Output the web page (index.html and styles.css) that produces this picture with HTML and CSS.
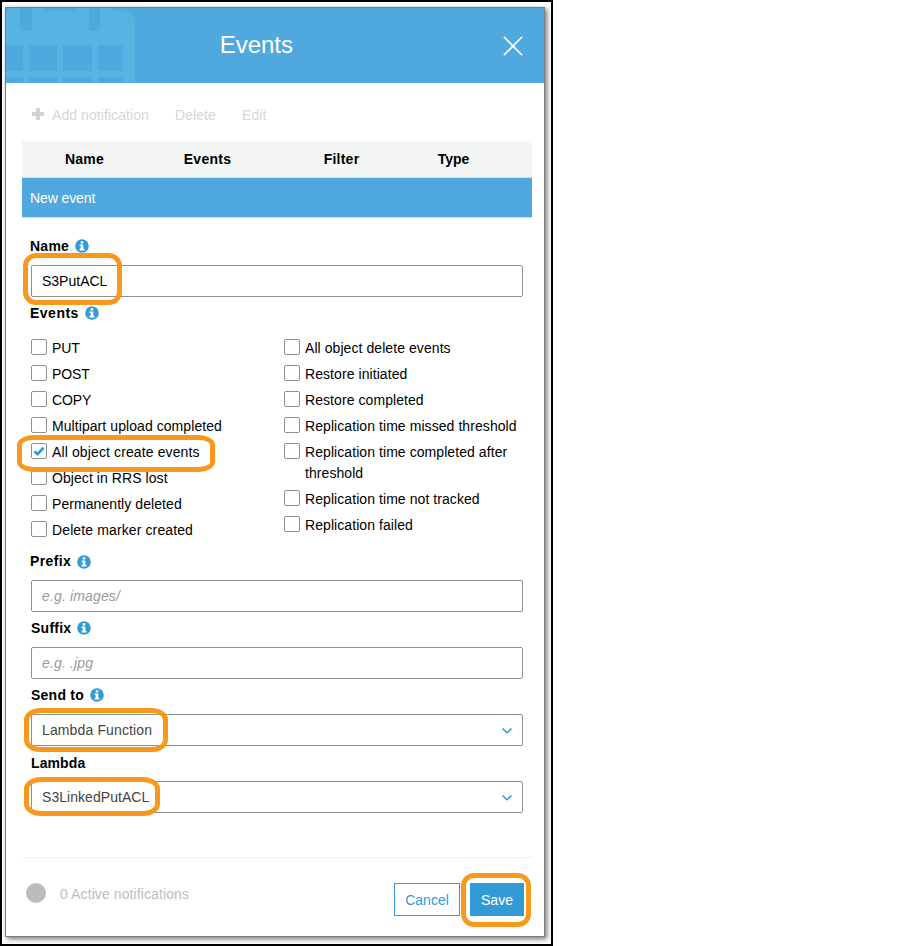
FILE: index.html
```html
<!DOCTYPE html>
<html lang="en">
<head>
<meta charset="utf-8">
<title>Events</title>
<link rel="stylesheet" href="styles.css">
</head>
<body>
<svg width="0" height="0" class="defs">
  <symbol id="info" viewBox="0 0 14 14"><circle cx="7" cy="7" r="6.8" fill="#329ad6"/><path d="M5.700 2.300h2.600v2.100H5.700zM4.600 5.500h3.700v4.300h1.100v1.600H4.600V9.800h1.100V7.100H4.600z" fill="#fff"/></symbol>
  <symbol id="chevron" viewBox="0 0 12 8"><path d="M1.500 1.500 6 5.800l4.500-4.300" fill="none" stroke="#329ad6" stroke-width="1.500"/></symbol>
</svg>
<div class="frame">
  <main class="dialog">
    <header class="header">
      <svg class="calendar" width="130" height="75" viewBox="0 0 130 75">
        <path d="M3 0h34v3h34V0h34v3h12q12 1 12 13v59H0V3h3z" fill="#56b4e3"/>
        <path d="M14 0h12v20q0 3-3 3h-6q-3 0-3-3zM83 0h11v20q0 3-3 3h-5q-3 0-3-3zM0 37h17v26H0zM23 37h28v26H23zM57 37h29v26H57zM92 37h25v26H92zM0 69h17v6H0zM23 69h28v6H23zM57 69h29v6H57zM92 69h25v6H92z" fill="#4fa9de"/>
      </svg>
      <h1>Events</h1>
      <svg class="close" width="20" height="20" viewBox="0 0 20 20"><path d="M.8.8l18.400 18.400M19.200.8.8 19.200" stroke="#fff" stroke-width="1.600"/></svg>
    </header>
    <div class="toolbar">
      <svg class="plus" width="12" height="12" viewBox="0 0 12 12"><path d="M4 0h4v4h4v4H8v4H4V8H0V4h4z" fill="#d0d3d3"/></svg>
      <span class="add">Add notification</span><span class="delete">Delete</span><span>Edit</span>
    </div>
    <div class="table">
      <div class="thead"><b>Name</b><b>Events</b><b>Filter</b><b class="type">Type</b></div>
      <div class="selected">New event</div>
    </div>
    <form class="form">
      <div class="label first">Name <svg class="info"><use href="#info"/></svg></div>
      <div class="input"><span>S3PutACL</span></div>
      <div class="label wide">Events <svg class="info"><use href="#info"/></svg></div>
      <div class="events">
        <div class="column">
          <div class="check"><i></i><span class="tight">PUT</span></div>
          <div class="check"><i></i><span class="tight">POST</span></div>
          <div class="check"><i></i><span class="tight">COPY</span></div>
          <div class="check"><i></i><span>Multipart upload completed</span></div>
          <div class="check"><i><svg width="14" height="14" viewBox="0 0 14 14"><path d="M2.500 7.300l3 2.800 6-6.300" fill="none" stroke="#329ad6" stroke-width="2.800"/></svg></i><span class="loose">All object create events</span></div>
          <div class="check"><i></i><span>Object in RRS lost</span></div>
          <div class="check"><i></i><span>Permanently deleted</span></div>
          <div class="check"><i></i><span class="loose">Delete marker created</span></div>
        </div>
        <div class="column">
          <div class="check"><i></i><span>All object delete events</span></div>
          <div class="check"><i></i><span>Restore initiated</span></div>
          <div class="check"><i></i><span>Restore completed</span></div>
          <div class="check"><i></i><span>Replication time missed threshold</span></div>
          <div class="check"><i></i><span>Replication time completed after<br>threshold</span></div>
          <div class="check"><i></i><span>Replication time not tracked</span></div>
          <div class="check"><i></i><span>Replication failed</span></div>
        </div>
      </div>
      <div class="label prefix">Prefix <svg class="info"><use href="#info"/></svg></div>
      <div class="input hint">e.g. images/</div>
      <div class="label suffix">Suffix <svg class="info"><use href="#info"/></svg></div>
      <div class="input hint">e.g. .jpg</div>
      <div class="label send">Send to <svg class="info"><use href="#info"/></svg></div>
      <div class="input select"><span>Lambda Function</span><svg width="12" height="8"><use href="#chevron"/></svg></div>
      <div class="label lambda">Lambda</div>
      <div class="input select"><span class="function">S3LinkedPutACL</span><svg width="12" height="8"><use href="#chevron"/></svg></div>
    </form>
    <footer class="footer">
      <i class="dot"></i><span class="status">0 Active notifications</span>
      <span class="button cancel">Cancel</span><span class="button save">Save</span>
    </footer>
  </main>
  <div class="callout on-name"></div>
  <div class="callout on-create"></div>
  <div class="callout on-send"></div>
  <div class="callout on-lambda"></div>
  <div class="callout on-save"></div>
</div>
</body>
</html>
```
FILE: styles.css
```css
* { box-sizing: border-box; }
body { margin: 0; background: #fff; font: 14px/21px "Liberation Sans", Arial, sans-serif; color: #000; overflow: hidden; }
svg { display: block; flex: none; }
.defs { position: absolute; }
.frame { position: relative; width: 553px; height: 946px; border: 2px solid #000; padding: 5px 0 0 3px; }
.dialog { width: 540px; height: 930px; border: 1px solid #7d7d7d; box-shadow: 2px 2px 5px rgba(0,0,0,.55); display: flex; flex-direction: column; }
.header { position: relative; height: 75px; flex: none; background: #4fa9de; display: flex; justify-content: flex-end; }
.calendar { position: absolute; left: 0; top: 0; }
.header h1 { margin: 23px 210px 0 0; font-size: 24px; line-height: 28px; font-weight: 400; color: #fff; }
.close { margin: 28px 21px 0 0; }
.toolbar { height: 58px; flex: none; display: flex; align-items: flex-start; padding: 22px 0 0 26px; color: #d5d7d7; letter-spacing: .07px; }
.plus { margin: 3px 8px 0 0; }
.add { width: 123px; }
.delete { width: 67px; }
.table { width: 510px; margin-left: 16px; flex: none; }
.thead { height: 37px; background: #f4f6f6; border-bottom: 1px solid #d9dede; display: grid; grid-template-columns: 125px 121px 147px 77px; text-align: center; padding-top: 8px; letter-spacing: .25px; }
.type { letter-spacing: 0; }
.selected { height: 40px; background: #4fa9de; border-bottom: 1px solid #d5e3ea; color: #fff; padding: 10px 8px 0; letter-spacing: -.1px; }
.form { width: 493px; margin-left: 24px; flex: none; }
.label { height: 35px; padding: 6px 0 0; display: flex; font-weight: 700; letter-spacing: .25px; }
.label.first { height: 47px; padding-top: 18px; }
.label.wide { letter-spacing: .5px; }
.info { width: 14px; height: 14px; margin: 3px 0 0 6px; }
.input { width: 492px; height: 32px; margin-left: 1px; border: 1px solid #879196; border-radius: 2px; padding: 5px 10px; }
.hint { color: #999; font-style: italic; letter-spacing: .15px; }
.select { display: flex; justify-content: space-between; color: #444; letter-spacing: .13px; padding-right: 9px; }
.function { letter-spacing: .05px; }
.select svg { margin-top: 7px; }
.events { display: flex; padding-top: 6px; height: 210px; }
.column { width: 253px; padding-left: 1px; flex: none; }
.check { display: flex; margin-bottom: 5px; letter-spacing: .07px; white-space: nowrap; }
.check i { width: 16px; height: 16px; margin: 1px 5px 0 0; border: 1px solid #879196; border-radius: 2px; flex: none; }
.tight { letter-spacing: -.1px; }
.loose { letter-spacing: .12px; }
.label.prefix { height: 38px; padding-top: 9px; letter-spacing: .4px; }
.prefix .info { margin-top: 4px; }
.suffix, .send { padding-left: 1px; }
.suffix .info, .send .info { margin-left: 5.500px; }
.lambda { padding: 7px 0 0 1px; letter-spacing: .1px; }
.footer { width: 510px; margin: 44px 0 0 16px; border-top: 1px solid #f0f2f2; display: flex; align-items: flex-start; }
.dot { width: 20px; height: 20px; border-radius: 50%; background: #bbbdbd; margin: 25px 14px 0 4px; }
.status { color: #bbbdbd; margin-top: 26px; letter-spacing: .1px; }
.button { height: 33px; margin-top: 25px; border: 1px solid #329ad6; line-height: 32px; text-align: center; }
.cancel { width: 66px; margin-left: auto; color: #329ad6; }
.save { width: 54px; margin: 25px 8px 0 10px; background: #329ad6; color: #fff; }
.callout { position: absolute; border: 5px solid #f8981d; border-radius: 13px; }
.on-name { left: 21px; top: 251px; width: 99px; height: 52px; }
.on-create { left: 15px; top: 433px; width: 198px; height: 37px; border-radius: 17px / 10px; }
.on-send { left: 22px; top: 706px; width: 144px; height: 44px; border-radius: 16px / 12px; }
.on-lambda { left: 22px; top: 775px; width: 136px; height: 39px; border-radius: 17px / 12px; }
.on-save { left: 459px; top: 871px; width: 70px; height: 54px; }
```
